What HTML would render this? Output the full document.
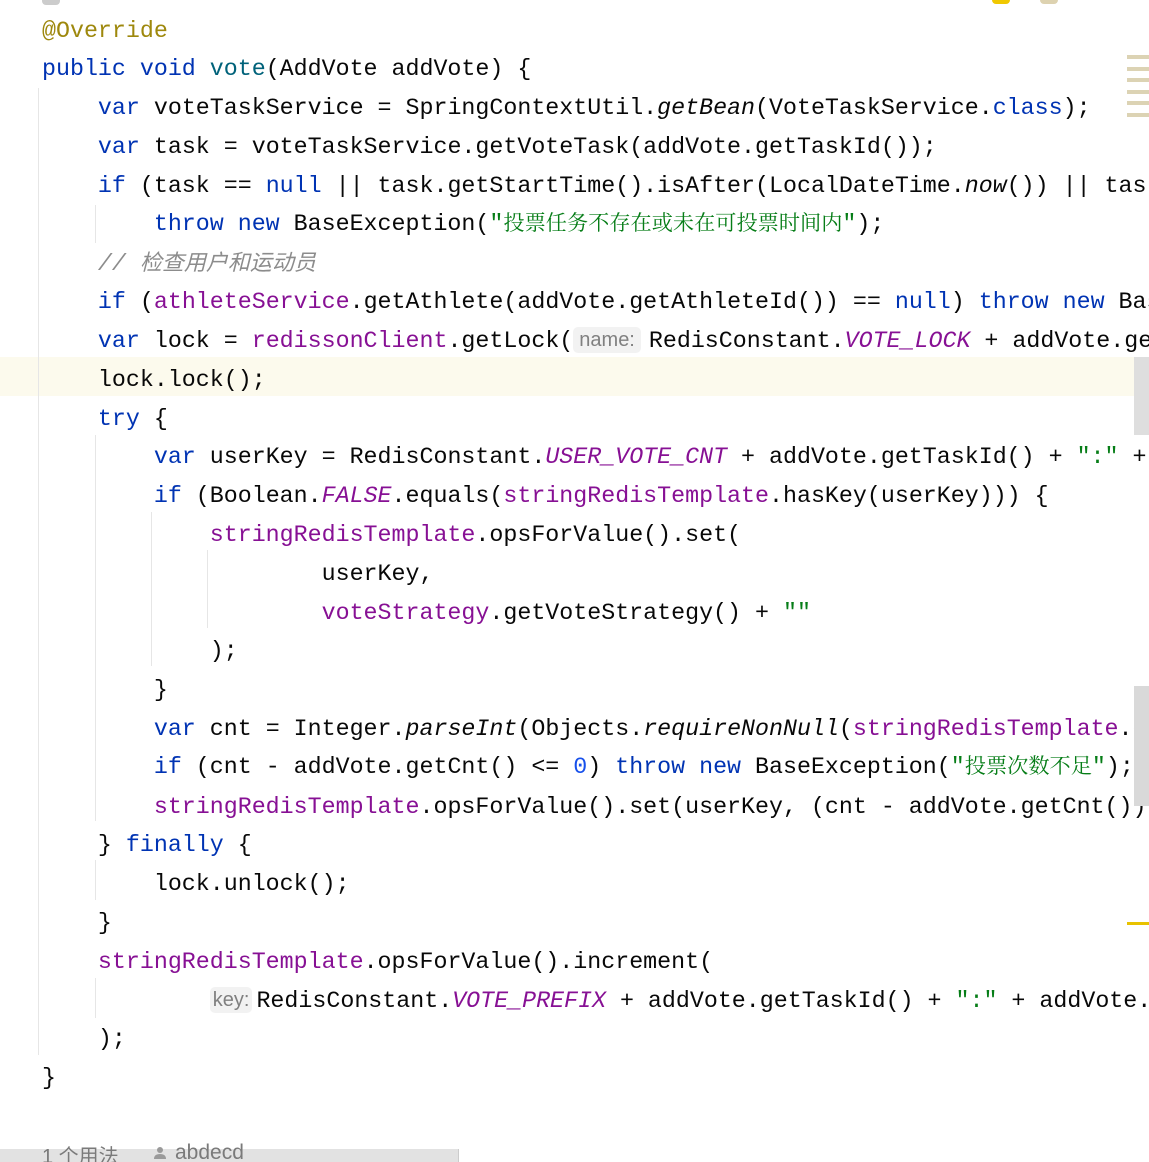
<!DOCTYPE html>
<html><head><meta charset="utf-8"><style>
html,body{margin:0;padding:0;width:1149px;height:1162px;overflow:hidden;background:#fff;position:relative}
#w{position:absolute;left:0;top:0;width:1149px;height:1162px;overflow:hidden}
.l{position:absolute;left:42px;height:38.8px;line-height:38.8px;white-space:pre;font-family:"Liberation Mono","Noto Sans CJK SC",monospace;font-size:23.3px;color:#080808}
.k{color:#0033b3}.m{color:#00627a}.a{color:#9e880d}.s{color:#067d17}.f{color:#871094}.fi{color:#871094;font-style:italic}.i{font-style:italic}.n{color:#1750eb}
.c{color:#8c8c8c;font-style:italic}
.cj{font-family:"Noto Serif CJK SC",serif;font-size:21.2px}
.cc{font-family:"Noto Sans CJK SC",sans-serif;font-size:22px}
.h{display:inline-block;background:#f2f2f2;color:#808080;font-family:"Liberation Sans",sans-serif;font-size:20px;line-height:26px;padding:0 6px;border-radius:5px;margin-right:8px;vertical-align:1px}
.g{position:absolute;width:1px;background:#e6e6e6}
</style></head><body><div id="w">
<div style="position:absolute;left:0;top:357px;width:1149px;height:39px;background:#fcfaed"></div>
<div class="g" style="left:38px;top:88px;height:967px"></div>
<div class="g" style="left:95px;top:205px;height:38px"></div>
<div class="g" style="left:95px;top:435px;height:386px"></div>
<div class="g" style="left:151px;top:512px;height:154px"></div>
<div class="g" style="left:207px;top:550px;height:78px"></div>
<div class="g" style="left:95px;top:860px;height:40px"></div>
<div class="g" style="left:95px;top:978px;height:40px"></div>

<div class="l" style="top:11.6px"><span class="a">@Override</span></div>
<div class="l" style="top:50.4px"><span class="k">public void </span><span class="m">vote</span>(AddVote addVote) {</div>
<div class="l" style="top:89.2px">    <span class="k">var</span> voteTaskService = SpringContextUtil.<span class="i">getBean</span>(VoteTaskService.<span class="k">class</span>);</div>
<div class="l" style="top:128px">    <span class="k">var</span> task = voteTaskService.getVoteTask(addVote.getTaskId());</div>
<div class="l" style="top:166.8px">    <span class="k">if</span> (task == <span class="k">null</span> || task.getStartTime().isAfter(LocalDateTime.<span class="i">now</span>()) || task.getEndTime()</div>
<div class="l" style="top:202.6px">        <span class="k">throw new</span> BaseException(<span class="s">"<span class="cj">投票任务不存在或未在可投票时间内</span>"</span>);</div>
<div class="l" style="top:242.4px">    <span class="c">// <span class="cc">检查用户和运动员</span></span></div>
<div class="l" style="top:283.2px">    <span class="k">if</span> (<span class="f">athleteService</span>.getAthlete(addVote.getAthleteId()) == <span class="k">null</span>) <span class="k">throw new</span> BaseException</div>
<div class="l" style="top:322px">    <span class="k">var</span> lock = <span class="f">redissonClient</span>.getLock(<span class="h">name:</span>RedisConstant.<span class="fi">VOTE_LOCK</span> + addVote.getTaskId());</div>
<div class="l" style="top:360.8px">    lock.lock();</div>
<div class="l" style="top:399.6px">    <span class="k">try</span> {</div>
<div class="l" style="top:438.4px">        <span class="k">var</span> userKey = RedisConstant.<span class="fi">USER_VOTE_CNT</span> + addVote.getTaskId() + <span class="s">":"</span> + addVote</div>
<div class="l" style="top:477.2px">        <span class="k">if</span> (Boolean.<span class="fi">FALSE</span>.equals(<span class="f">stringRedisTemplate</span>.hasKey(userKey))) {</div>
<div class="l" style="top:516px">            <span class="f">stringRedisTemplate</span>.opsForValue().set(</div>
<div class="l" style="top:554.8px">                    userKey,</div>
<div class="l" style="top:593.6px">                    <span class="f">voteStrategy</span>.getVoteStrategy() + <span class="s">""</span></div>
<div class="l" style="top:632.4px">            );</div>
<div class="l" style="top:671.2px">        }</div>
<div class="l" style="top:710px">        <span class="k">var</span> cnt = Integer.<span class="i">parseInt</span>(Objects.<span class="i">requireNonNull</span>(<span class="f">stringRedisTemplate</span>.opsForValue</div>
<div class="l" style="top:745.8px">        <span class="k">if</span> (cnt - addVote.getCnt() &lt;= <span class="n">0</span>) <span class="k">throw new</span> BaseException(<span class="s">"<span class="cj">投票次数不足</span>"</span>);</div>
<div class="l" style="top:787.6px">        <span class="f">stringRedisTemplate</span>.opsForValue().set(userKey, (cnt - addVote.getCnt()) + <span class="s">""</span>);</div>
<div class="l" style="top:826.4px">    } <span class="k">finally</span> {</div>
<div class="l" style="top:865.2px">        lock.unlock();</div>
<div class="l" style="top:904px">    }</div>
<div class="l" style="top:942.8px">    <span class="f">stringRedisTemplate</span>.opsForValue().increment(</div>
<div class="l" style="top:981.6px">            <span class="h" style="padding:0 3px;margin-right:4px">key:</span>RedisConstant.<span class="fi">VOTE_PREFIX</span> + addVote.getTaskId() + <span class="s">":"</span> + addVote.getAthleteId()</div>
<div class="l" style="top:1020.4px">    );</div>
<div class="l" style="top:1059.2px">}</div>

<div style="position:absolute;left:1127px;top:55px;width:22px">
<div style="height:4px;background:#dcd3b4;margin-bottom:7.5px"></div>
<div style="height:4px;background:#dcd3b4;margin-bottom:7.5px"></div>
<div style="height:4px;background:#dcd3b4;margin-bottom:7.5px"></div>
<div style="height:4px;background:#dcd3b4;margin-bottom:7.5px"></div>
<div style="height:4px;background:#dcd3b4;margin-bottom:7.5px"></div>
<div style="height:4px;background:#dcd3b4;margin-bottom:7.5px"></div>
</div>
<div style="position:absolute;left:1134px;top:357px;width:15px;height:78px;background:#dedede"></div>
<div style="position:absolute;left:1134px;top:686px;width:15px;height:120px;background:#d9d9d9"></div>
<div style="position:absolute;left:1127px;top:922px;width:22px;height:3px;background:#e8c200"></div>
<div style="position:absolute;left:992px;top:0;width:18px;height:4px;background:#f0c800;border-radius:0 0 4px 4px"></div>
<div style="position:absolute;left:1040px;top:0;width:18px;height:4px;background:#ddd2b0;border-radius:0 0 4px 4px"></div>
<div style="position:absolute;left:42px;top:0;width:18px;height:5px;background:#ccc;border-radius:0 0 4px 4px"></div>

<div style="position:absolute;left:0;top:1149px;width:458px;height:13px;background:#e2e2e2;border-right:1px solid #ccc"></div>
<div style="position:absolute;left:42px;top:1140px;font-family:'Liberation Sans','Noto Sans CJK SC',sans-serif;font-size:20px;color:#7a7a7a;white-space:pre">1 个用法</div>
<svg style="position:absolute;left:153px;top:1146px" width="14" height="14" viewBox="0 0 14 14"><circle cx="7" cy="4" r="3" fill="#9a9a9a"/><path d="M1 13 Q1 8 7 8 Q13 8 13 13 Z" fill="#9a9a9a"/></svg>
<div style="position:absolute;left:175px;top:1141px;font-family:'Liberation Sans',sans-serif;font-size:21px;color:#7a7a7a">abdecd</div>
</div></body></html>
